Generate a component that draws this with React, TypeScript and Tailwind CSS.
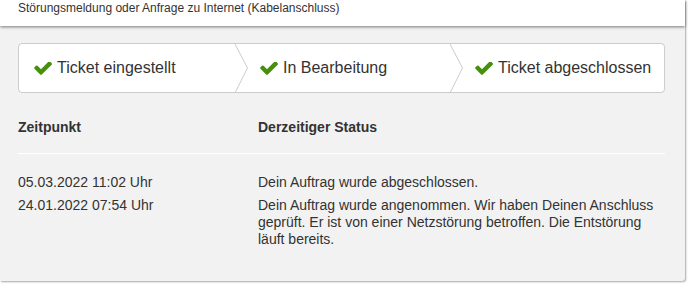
import React from 'react';

const steps = ['Ticket eingestellt', 'In Bearbeitung', 'Ticket abgeschlossen'];

const history = [
  { time: '05.03.2022 11:02 Uhr', status: 'Dein Auftrag wurde abgeschlossen.' },
  {
    time: '24.01.2022 07:54 Uhr',
    status:
      'Dein Auftrag wurde angenommen. Wir haben Deinen Anschluss geprüft. Er ist von einer Netzstörung betroffen. Die Entstörung läuft bereits.',
  },
];

function Check() {
  return (
    <svg viewBox="109 402 1562 1124" className="w-[18px] h-[13px] shrink-0" fill="#47900b">
      <path d="M1671 566q0 40-28 68l-724 724-136 136q-28 28-68 28t-68-28l-136-136-362-362q-28-28-28-68t28-68l136-136q28-28 68-28t68 28l294 295 656-657q28-28 68-28t68 28l136 136q28 28 28 68z" />
    </svg>
  );
}

export default function App() {
  return (
    <div className="w-[691px] h-[291px] bg-white font-['Liberation_Sans',Arial,sans-serif] text-[#333] overflow-hidden">
      <div className="w-[685px] h-[281px] bg-[#f2f2f2] rounded-br-[3px] shadow-[1px_1px_2px_rgba(0,0,0,0.35)]">
        <div className="relative z-10 h-[26px] bg-white px-[18px] pt-[1px] text-[12px] leading-[14px] shadow-[0_1px_3px_rgba(0,0,0,0.5)]">
          Störungsmeldung oder Anfrage zu Internet (Kabelanschluss)
        </div>

        <div className="px-[18px] pt-[17px]">
          <div className="w-[647px] h-[50px] bg-white border border-[#ccc] rounded-[4px] grid grid-cols-3">
            {steps.map((s, i) => (
              <div
                key={s}
                className={`relative flex items-center gap-[5px] text-[16px] leading-[18px] ${i === 0 ? 'pl-[15px]' : 'pl-[26px]'}`}
              >
                {i > 0 && (
                  <svg className="absolute left-0 top-0 w-[15px] h-[48px]" viewBox="0 0 15 48">
                    <polyline points="0.5,-1 13.5,24 1,49" fill="none" stroke="#ccc" strokeWidth="1" />
                  </svg>
                )}
                <Check />
                <span>{s}</span>
              </div>
            ))}
          </div>

          <div className="w-[647px] mt-[26px]">
            <div className="flex text-[14px] leading-[16px] font-bold pb-[18px] border-b border-white">
              <div className="w-[240px]">Zeitpunkt</div>
              <div>Derzeitiger Status</div>
            </div>
            <div className="pt-[20px] flex flex-col gap-[6px] text-[14px] leading-[17px]">
              {history.map((h) => (
                <div key={h.time} className="flex">
                  <div className="w-[240px] shrink-0">{h.time}</div>
                  <div className="w-[407px]">{h.status}</div>
                </div>
              ))}
            </div>
          </div>
        </div>
      </div>
    </div>
  );
}
